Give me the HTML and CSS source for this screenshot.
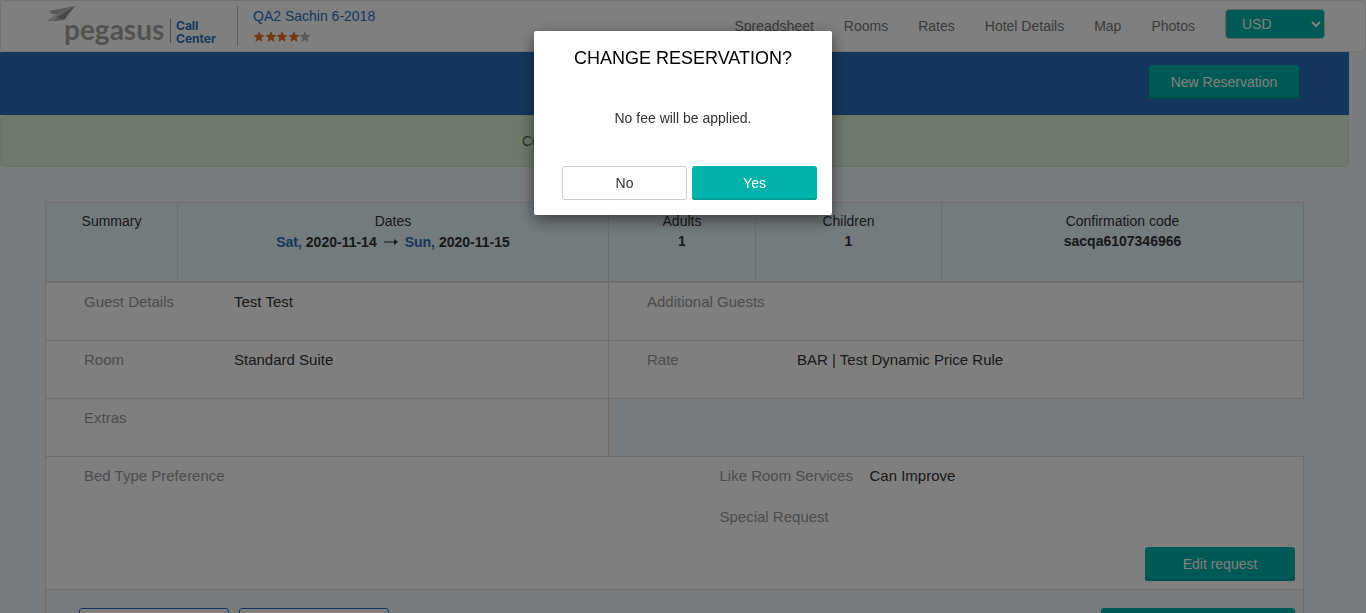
FILE: index.html
```html
<!DOCTYPE html>
<html lang="en">
<head>
<meta charset="utf-8">
<title>Change reservation</title>
<link rel="stylesheet" href="styles.css">
</head>
<body>
<header class="topbar">
  <a class="logo" href="#">
    <svg width="170" height="42" viewBox="0 0 170 42" role="img" aria-label="pegasus Call Center">
      <path fill="#b2b2b0" d="M2 6 28 1 13 9 5 9Z"/>
      <path fill="#c6c6c4" d="M0 16 8 10 28 1 10 16Z"/>
      <path fill="#8c8c8a" d="M28 1 17 15 10 12Z"/>
      <path fill="#a8a8a6" d="M10 12 17 15 7 16Z"/>
      <text class="logo-word" x="17" y="35">pegasus</text>
      <path stroke="#9a9a9a" stroke-width="1" d="M123.500 14V38"/>
      <text class="logo-sub" x="129" y="25">Call</text>
      <text class="logo-sub" x="129" y="38">Center</text>
    </svg>
  </a>
  <div class="hotel">
    <a class="hotel-name" href="#">QA2 Sachin 6-2018</a>
    <svg class="stars" width="58" height="12" viewBox="0 0 58 12" role="img" aria-label="4 out of 5 stars">
      <defs><path id="star" d="M5 0 6.500 3.800 10.600 4.200 7.600 6.800 8.500 11 5 8.800 1.500 11 2.400 6.800-.6 4.200 3.500 3.800Z"/></defs>
      <g fill="#e8702a">
        <use href="#star" x="1"/><use href="#star" x="13"/><use href="#star" x="24"/><use href="#star" x="36"/>
      </g>
      <use href="#star" x="47" fill="#b5b5b5"/>
    </svg>
  </div>
  <nav class="nav">
    <a href="#">Spreadsheet</a>
    <a href="#">Rooms</a>
    <a href="#">Rates</a>
    <a href="#">Hotel Details</a>
    <a href="#">Map</a>
    <a href="#">Photos</a>
  </nav>
  <select class="currency" aria-label="Currency"><option>USD</option></select>
</header>

<main class="page">
  <div class="band"><button class="btn btn-primary" type="button">New Reservation</button></div>
  <div class="alert"><p class="alert-text">Co</p></div>

  <section class="booking">
    <div class="summary">
      <div class="summary-cell">Summary</div>
      <div class="summary-cell">Dates
        <strong class="dates"><span><span class="day">Sat,</span> 2020-11-14</span>
          <svg width="14" height="8" viewBox="0 0 14 8" aria-hidden="true"><path d="M0 3.400H10V1L14 4 10 7V4.600H0Z" fill="#333"/></svg>
          <span><span class="day">Sun,</span> 2020-11-15</span></strong>
      </div>
      <div class="summary-cell">Adults<strong>1</strong></div>
      <div class="summary-cell">Children<strong>1</strong></div>
      <div class="summary-cell">Confirmation code<strong>sacqa6107346966</strong></div>
    </div>
    <div class="row">
      <div class="cell"><span class="label">Guest Details</span><span>Test Test</span></div>
      <div class="cell"><span class="label">Additional Guests</span></div>
    </div>
    <div class="row">
      <div class="cell"><span class="label">Room</span><span>Standard Suite</span></div>
      <div class="cell"><span class="label">Rate</span><span>BAR | Test Dynamic Price Rule</span></div>
    </div>
    <div class="row">
      <div class="cell"><span class="label">Extras</span></div>
    </div>
    <div class="requests">
      <div class="preference"><span class="label">Bed Type Preference</span></div>
      <div class="answers">
        <div class="answer"><span class="label">Like Room Services</span><span>Can Improve</span></div>
        <div class="answer"><span class="label">Special Request</span></div>
        <button class="btn btn-primary edit" type="button">Edit request</button>
      </div>
    </div>
    <div class="actions">
      <button class="btn btn-outline" type="button"></button>
      <button class="btn btn-outline" type="button"></button>
      <button class="btn btn-primary btn-wide" type="button"></button>
    </div>
  </section>
</main>

<div class="overlay">
  <div class="modal" role="dialog" aria-modal="true" aria-labelledby="modal-title">
    <h1 class="modal-title" id="modal-title">CHANGE RESERVATION?</h1>
    <p class="modal-text">No fee will be applied.</p>
    <div class="modal-buttons">
      <button class="btn btn-default" type="button">No</button>
      <button class="btn btn-primary" type="button">Yes</button>
    </div>
  </div>
</div>
</body>
</html>
```
FILE: styles.css
```css
* { box-sizing: border-box; }

body {
  margin: 0;
  height: 100vh;
  overflow: hidden;
  background: #f5f6fa;
  color: #333;
  font: 14px/20px "Liberation Sans", Arial, sans-serif;
}

a { color: inherit; text-decoration: none; }
p, h1 { margin: 0; }

.topbar {
  display: flex;
  align-items: center;
  height: 52px;
  padding: 0 40px 0 46px;
  border: 1px solid #e7e7e7;
  border-radius: 4px;
  background: #fff;
}

.logo { display: flex; padding-right: 20px; }
.logo-word { font: 700 28px Lato, sans-serif; fill: #a5a5a3; }
.logo-sub { font: 700 12px Inter, sans-serif; fill: #2a6ebb; }

.hotel {
  display: flex;
  flex-direction: column;
  height: 40px;
  padding-left: 15px;
  border-left: 1px solid #bbb;
}
.hotel-name { color: #2a6ebb; }
.stars { margin-top: 5px; }

.nav {
  display: flex;
  gap: 30px;
  margin-left: auto;
  padding-right: 30px;
  color: #777;
}

.currency {
  width: 100px;
  height: 30px;
  margin-bottom: 4px;
  padding: 0 0 0 12px;
  border: 1px solid #ccc;
  border-radius: 4px;
  background: #00b2aa;
  color: #fff;
  font: inherit;
}

.page { padding-right: 17px; }

.band {
  display: flex;
  justify-content: flex-end;
  padding: 13px 50px 16px;
  background: #2a6ebb;
}

.btn {
  width: 150px;
  height: 34px;
  padding: 0;
  border: 1px solid transparent;
  border-radius: 3px;
  font: inherit;
}
.btn-primary {
  border: 0;
  background: #00b2aa;
  box-shadow: inset 0 -2px #009d95;
  color: #fff;
}
.btn-outline { border-color: #2a6ebb; background: #fff; }
.btn-default { border-color: #ccc; background: #fff; color: #333; }
.btn-wide { width: 194px; margin-left: auto; }

.alert {
  padding: 15px;
  border: 1px solid #d6e9c6;
  border-radius: 4px;
  background: #dff0d8;
  color: #3c763d;
}
.alert-text { width: 305px; margin: 0 auto; }

.booking {
  margin: 35px 45px 0;
  border: 1px solid #ddd;
  border-width: 1px 0 0 1px;
  font-size: 15px;
}

.summary {
  display: grid;
  grid-template-columns: 132fr 431fr 147fr 186fr 362fr;
  min-height: 80px;
  border-bottom: 2px solid #ddd;
  background: #e8f6fb;
  font-size: 14px;
  text-align: center;
}
.summary-cell { padding-top: 8px; border-right: 1px solid #ddd; }
.summary-cell strong { display: block; }
.summary-cell .dates {
  display: flex;
  align-items: center;
  justify-content: center;
  gap: 7px;
  padding-top: 1px;
}
.day { color: #2a6ebb; }

.row { display: grid; grid-template-columns: 563fr 695fr; }
.cell {
  display: flex;
  min-height: 58px;
  padding: 9px 0 0 38px;
  border: 1px solid #ddd;
  border-width: 0 1px 1px 0;
  background: #fff;
}
.label { width: 150px; color: #999; }

.requests {
  display: grid;
  grid-template-columns: 1fr 1fr;
  min-height: 134px;
  margin-top: -1px;
  border: 1px solid #ddd;
  border-left: 0;
  background: #fff;
}
.preference { padding: 9px 0 0 38px; }
.answers {
  display: flex;
  flex-direction: column;
  padding: 9px 8px 8px 45px;
}
.answer { display: flex; margin-bottom: 21px; }
.answer:nth-child(2) { margin-bottom: 0; }
.edit { margin-top: auto; align-self: flex-end; font-size: 14px; }

.actions {
  display: flex;
  gap: 10px;
  padding: 18px 8px 18px 33px;
  border-right: 1px solid #ddd;
}

.overlay {
  position: fixed;
  inset: 0;
  padding-top: 31px;
  background: rgba(0, 0, 0, .5);
}
.modal {
  width: 298px;
  margin: 0 auto;
  padding: 17px 15px 15px 28px;
  border-radius: 2px;
  background: #fff;
  box-shadow: 0 5px 15px rgba(0, 0, 0, .5);
}
.modal-title {
  padding-right: 13px;
  color: #000;
  font-size: 18px;
  font-weight: 400;
  line-height: 20px;
  text-align: center;
}
.modal-text { padding: 40px 13px 38px 0; text-align: center; }
.modal-buttons { display: grid; grid-template-columns: 1fr 1fr; gap: 5px; }
.modal-buttons .btn { width: auto; }
```
